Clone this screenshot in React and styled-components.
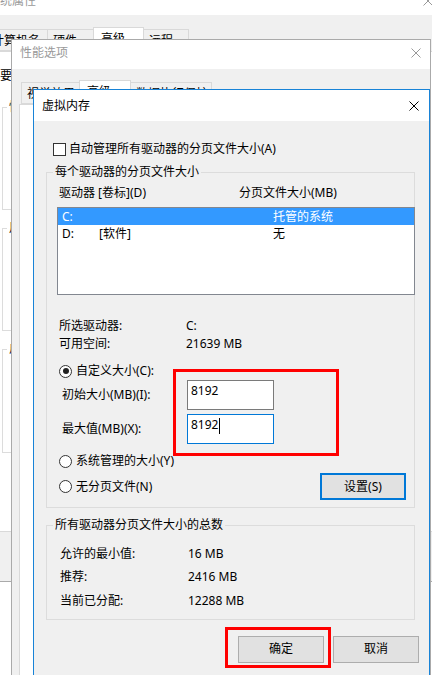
import React from 'react';
import styled, { createGlobalStyle } from 'styled-components';

const GlobalStyle = createGlobalStyle`
  html, body { margin: 0; padding: 0; background: #fff; }
  body {
    font-family: "Noto Sans", "Noto Sans CJK SC", sans-serif;
    font-size: 12px;
    line-height: 16px;
    color: #000;
  }
  *, *::before, *::after { box-sizing: border-box; }
`;

const Desktop = styled.div`
  position: relative;
  width: 432px;
  height: 675px;
  overflow: hidden;
  background: #fff;
`;

// windows stacked on the desktop
const Window = styled.div`
  position: absolute;
  z-index: ${(p) => p.$z};
  left: ${(p) => p.$x}px;
  top: ${(p) => p.$y}px;
  width: ${(p) => p.$w}px;
  height: ${(p) => p.$h}px;
  display: flex;
  flex-direction: column;
  background: #f0f0f0;
  border: 1px solid ${(p) => (p.$active ? '#1883d7' : '#aaaaaa')};
`;

const TitleBar = styled.div`
  flex: none;
  height: ${(p) => p.$h}px;
  display: flex;
  align-items: center;
  justify-content: space-between;
  padding: 0 ${(p) => p.$pr}px ${(p) => p.$pb || 0}px ${(p) => p.$pl}px;
  background: #fff;
  color: ${(p) => (p.$active ? '#000' : '#999')};
  white-space: nowrap;
`;

const Body = styled.div`
  flex: 1;
  min-height: 0;
  display: flex;
  flex-direction: column;
  padding: ${(p) => p.$pt}px ${(p) => p.$pr || 0}px ${(p) => p.$pb || 0}px ${(p) => p.$pl}px;
`;

const TabStrip = styled.div`
  display: flex;
  align-items: flex-end;
  margin-left: 2px;
`;

const Tab = styled.div`
  flex: none;
  position: relative;
  z-index: ${(p) => (p.$active ? 2 : 1)};
  width: ${(p) => p.$w}px;
  height: ${(p) => (p.$active ? 25 : 22)}px;
  margin: 0 -1px ${(p) => (p.$active ? -1 : 0)}px ${(p) => (p.$active ? -2 : 0)}px;
  padding: 3px 0 0 ${(p) => (p.$active ? 7 : 5)}px;
  background: ${(p) => (p.$active ? '#fff' : '#f0f0f0')};
  border: 1px solid #d9d9d9;
  border-bottom: ${(p) => (p.$active ? 'none' : '1px solid #d9d9d9')};
  white-space: nowrap;
`;

const TabPanel = styled.div`
  flex: 1;
  background: #fff;
  border: 1px solid #d9d9d9;
  padding: ${(p) => p.$pt || 0}px 0 0 ${(p) => p.$pl || 0}px;
  overflow: hidden;
`;

const Note = styled.div`
  white-space: nowrap;
`;

const Group = styled.fieldset`
  margin: ${(p) => p.$mt || 0}px ${(p) => p.$mr || 0}px 0 ${(p) => p.$ml || 0}px;
  padding: 0;
  min-width: 0;
  border: 1px solid #dcdcdc;
  ${(p) => (p.$h ? `height: ${p.$h}px;` : '')}
  ${(p) => (p.$w ? `width: ${p.$w}px;` : '')}
`;

const Legend = styled.legend`
  margin-left: ${(p) => p.$ml}px;
  padding: 0 2px;
  line-height: 16px;
  white-space: nowrap;
`;

// dialog parts
const CheckRow = styled.label`
  display: flex;
  align-items: center;
  gap: 3px;
  height: 16px;
  margin-left: 7px;
  white-space: nowrap;
`;

const CheckBox = styled.span`
  flex: none;
  width: 13px;
  height: 13px;
  border: 1px solid #333;
  background: #fff;
`;

const HeaderRow = styled.div`
  display: grid;
  grid-template-columns: 180px 1fr;
  margin: 5px 0 0 12px;
  white-space: nowrap;
`;

const ListBox = styled.div`
  height: 88px;
  margin: 6px -1px 0 10px;
  background: #fff;
  border: 1px solid #828790;
`;

const ListRow = styled.div`
  display: grid;
  grid-template-columns: 37px 174px 1fr;
  height: 17px;
  line-height: 17px;
  padding-left: 4px;
  background: ${(p) => (p.$selected ? '#3399ff' : 'transparent')};
  color: ${(p) => (p.$selected ? '#fff' : '#000')};
  white-space: nowrap;
`;

const InfoGrid = styled.div`
  display: grid;
  grid-template-columns: ${(p) => p.$col}px 1fr;
  grid-auto-rows: ${(p) => p.$row}px;
  align-items: center;
  margin-top: ${(p) => p.$mt}px;
  padding: 0 0 ${(p) => p.$pb || 0}px ${(p) => p.$pl}px;
  white-space: nowrap;
`;

const CustomSection = styled.div`
  position: relative;
  margin-top: 9px;
`;

const RadioRow = styled.div`
  display: flex;
  align-items: center;
  gap: 4px;
  height: 18px;
  padding-left: 12px;
  margin-top: ${(p) => p.$mt || 0}px;
  white-space: nowrap;
`;

const Radio = styled.span`
  flex: none;
  width: 13px;
  height: 13px;
  border-radius: 50%;
  border: 1px solid #333;
  background: #fff;
  display: flex;
  align-items: center;
  justify-content: center;

  &::after {
    content: '';
    display: ${(p) => (p.$checked ? 'block' : 'none')};
    width: 6px;
    height: 6px;
    border-radius: 50%;
    background: #222;
  }
`;

const SizeGrid = styled.div`
  display: grid;
  grid-template-columns: 125px 87px;
  row-gap: 4px;
  align-items: center;
  padding-left: 15px;
  white-space: nowrap;
`;

const TextBox = styled.div`
  height: 30px;
  padding: 2px 0 0 3px;
  background: #fff;
  border: 1px solid ${(p) => (p.$focused ? '#0078d7' : '#7a7a7a')};
  display: flex;
  align-items: flex-start;
`;

const Caret = styled.span`
  display: inline-block;
  width: 1px;
  height: 16px;
  margin: 1px 0 0 1px;
  background: #000;
`;

const LastRow = styled.div`
  display: flex;
  align-items: center;
  justify-content: space-between;
  margin-top: 3px;
  padding: 0 8px 7px 0;
`;

const Button = styled.button`
  position: relative;
  flex: none;
  width: 86px;
  height: 27px;
  padding: 0;
  font: inherit;
  color: #000;
  background: #e1e1e1;
  border: ${(p) => (p.$focused ? '2px solid #0078d7' : '1px solid #adadad')};
`;

const ButtonRow = styled.div`
  display: flex;
  justify-content: flex-end;
  gap: 9px;
  margin: 16px -4px 0 0;
`;

// red annotation frames drawn over the screenshot
const Highlight = styled.span`
  position: absolute;
  left: ${(p) => p.$x}px;
  top: ${(p) => p.$y}px;
  width: ${(p) => p.$w}px;
  height: ${(p) => p.$h}px;
  border: 3px solid #ff0000;
  pointer-events: none;
`;

const CloseIcon = ({ color }) => (
  <svg width="10" height="10" viewBox="0 0 10 10">
    <path d="M0.5 0.5 L9.5 9.5 M9.5 0.5 L0.5 9.5" stroke={color} strokeWidth="1" fill="none" />
  </svg>
);

export default function App() {
  return (
    <>
      <GlobalStyle />
      <Desktop>
        <Window $z={1} $x={-30} $y={-15} $w={470} $h={597}>
          <TitleBar $h={29} $pl={17} $pr={6}>
            <span>系统属性</span>
            <CloseIcon color="#999" />
          </TitleBar>
          <Body $pt={12} $pl={13} $pb={49}>
            <TabStrip>
              <Tab $w={62}>计算机名</Tab>
              <Tab $w={49}>硬件</Tab>
              <Tab $w={51} $active>高级</Tab>
              <Tab $w={46}>远程</Tab>
            </TabStrip>
            <TabPanel $pt={16} $pl={15}>
              <Note>要进行大多数更改，你必须作为管理员登录。</Note>
              <Group $mt={15} $ml={2} $w={380} $h={111}>
                <Legend $ml={4}>性能</Legend>
              </Group>
              <Group $mt={10} $ml={2} $w={380} $h={111}>
                <Legend $ml={4}>用户配置文件</Legend>
              </Group>
              <Group $mt={10} $ml={2} $w={380} $h={112}>
                <Legend $ml={4}>启动和故障恢复</Legend>
              </Group>
            </TabPanel>
          </Body>
        </Window>

        <Window $z={2} $x={11} $y={39} $w={420} $h={700}>
          <TitleBar $h={29} $pl={8} $pr={9} $pb={3}>
            <span>性能选项</span>
            <CloseIcon color="#999" />
          </TitleBar>
          <Body $pt={11} $pl={7}>
            <TabStrip>
              <Tab $w={61}>视觉效果</Tab>
              <Tab $w={52} $active>高级</Tab>
              <Tab $w={82}>数据执行保护</Tab>
            </TabStrip>
            <TabPanel />
          </Body>
        </Window>

        <Window $z={3} $x={33} $y={89} $w={397} $h={620} $active>
          <TitleBar $h={31} $pl={8} $pr={10} $active>
            <span>虚拟内存</span>
            <CloseIcon color="#000" />
          </TitleBar>
          <Body $pt={20} $pl={12} $pr={14}>
            <CheckRow>
              <CheckBox />
              <span>自动管理所有驱动器的分页文件大小(A)</span>
            </CheckRow>

            <Group $mt={7}>
              <Legend $ml={6}>每个驱动器的分页文件大小</Legend>
              <HeaderRow>
                <span>驱动器 [卷标](D)</span>
                <span>分页文件大小(MB)</span>
              </HeaderRow>
              <ListBox>
                <ListRow $selected>
                  <span>C:</span>
                  <span />
                  <span>托管的系统</span>
                </ListRow>
                <ListRow>
                  <span>D:</span>
                  <span>[软件]</span>
                  <span>无</span>
                </ListRow>
              </ListBox>

              <InfoGrid $col={127} $row={18} $mt={22} $pl={12}>
                <span>所选驱动器:</span>
                <span>C:</span>
                <span>可用空间:</span>
                <span>21639 MB</span>
              </InfoGrid>

              <CustomSection>
                <RadioRow>
                  <Radio $checked />
                  <span>自定义大小(C):</span>
                </RadioRow>
                <SizeGrid>
                  <span>初始大小(MB)(I):</span>
                  <TextBox>8192</TextBox>
                  <span>最大值(MB)(X):</span>
                  <TextBox $focused>
                    8192
                    <Caret />
                  </TextBox>
                </SizeGrid>
                <Highlight $x={126} $y={7} $w={166} $h={87} />
              </CustomSection>

              <RadioRow $mt={8}>
                <Radio />
                <span>系统管理的大小(Y)</span>
              </RadioRow>
              <LastRow>
                <RadioRow>
                  <Radio />
                  <span>无分页文件(N)</span>
                </RadioRow>
                <Button $focused>设置(S)</Button>
              </LastRow>
            </Group>

            <Group $mt={9}>
              <Legend $ml={6}>所有驱动器分页文件大小的总数</Legend>
              <InfoGrid $col={128} $row={23.5} $mt={9} $pl={13} $pb={6}>
                <span>允许的最小值:</span>
                <span>16 MB</span>
                <span>推荐:</span>
                <span>2416 MB</span>
                <span>当前已分配:</span>
                <span>12288 MB</span>
              </InfoGrid>
            </Group>

            <ButtonRow>
              <Button>
                确定
                <Highlight $x={-14} $y={-10} $w={106} $h={41} />
              </Button>
              <Button>取消</Button>
            </ButtonRow>
          </Body>
        </Window>
      </Desktop>
    </>
  );
}
